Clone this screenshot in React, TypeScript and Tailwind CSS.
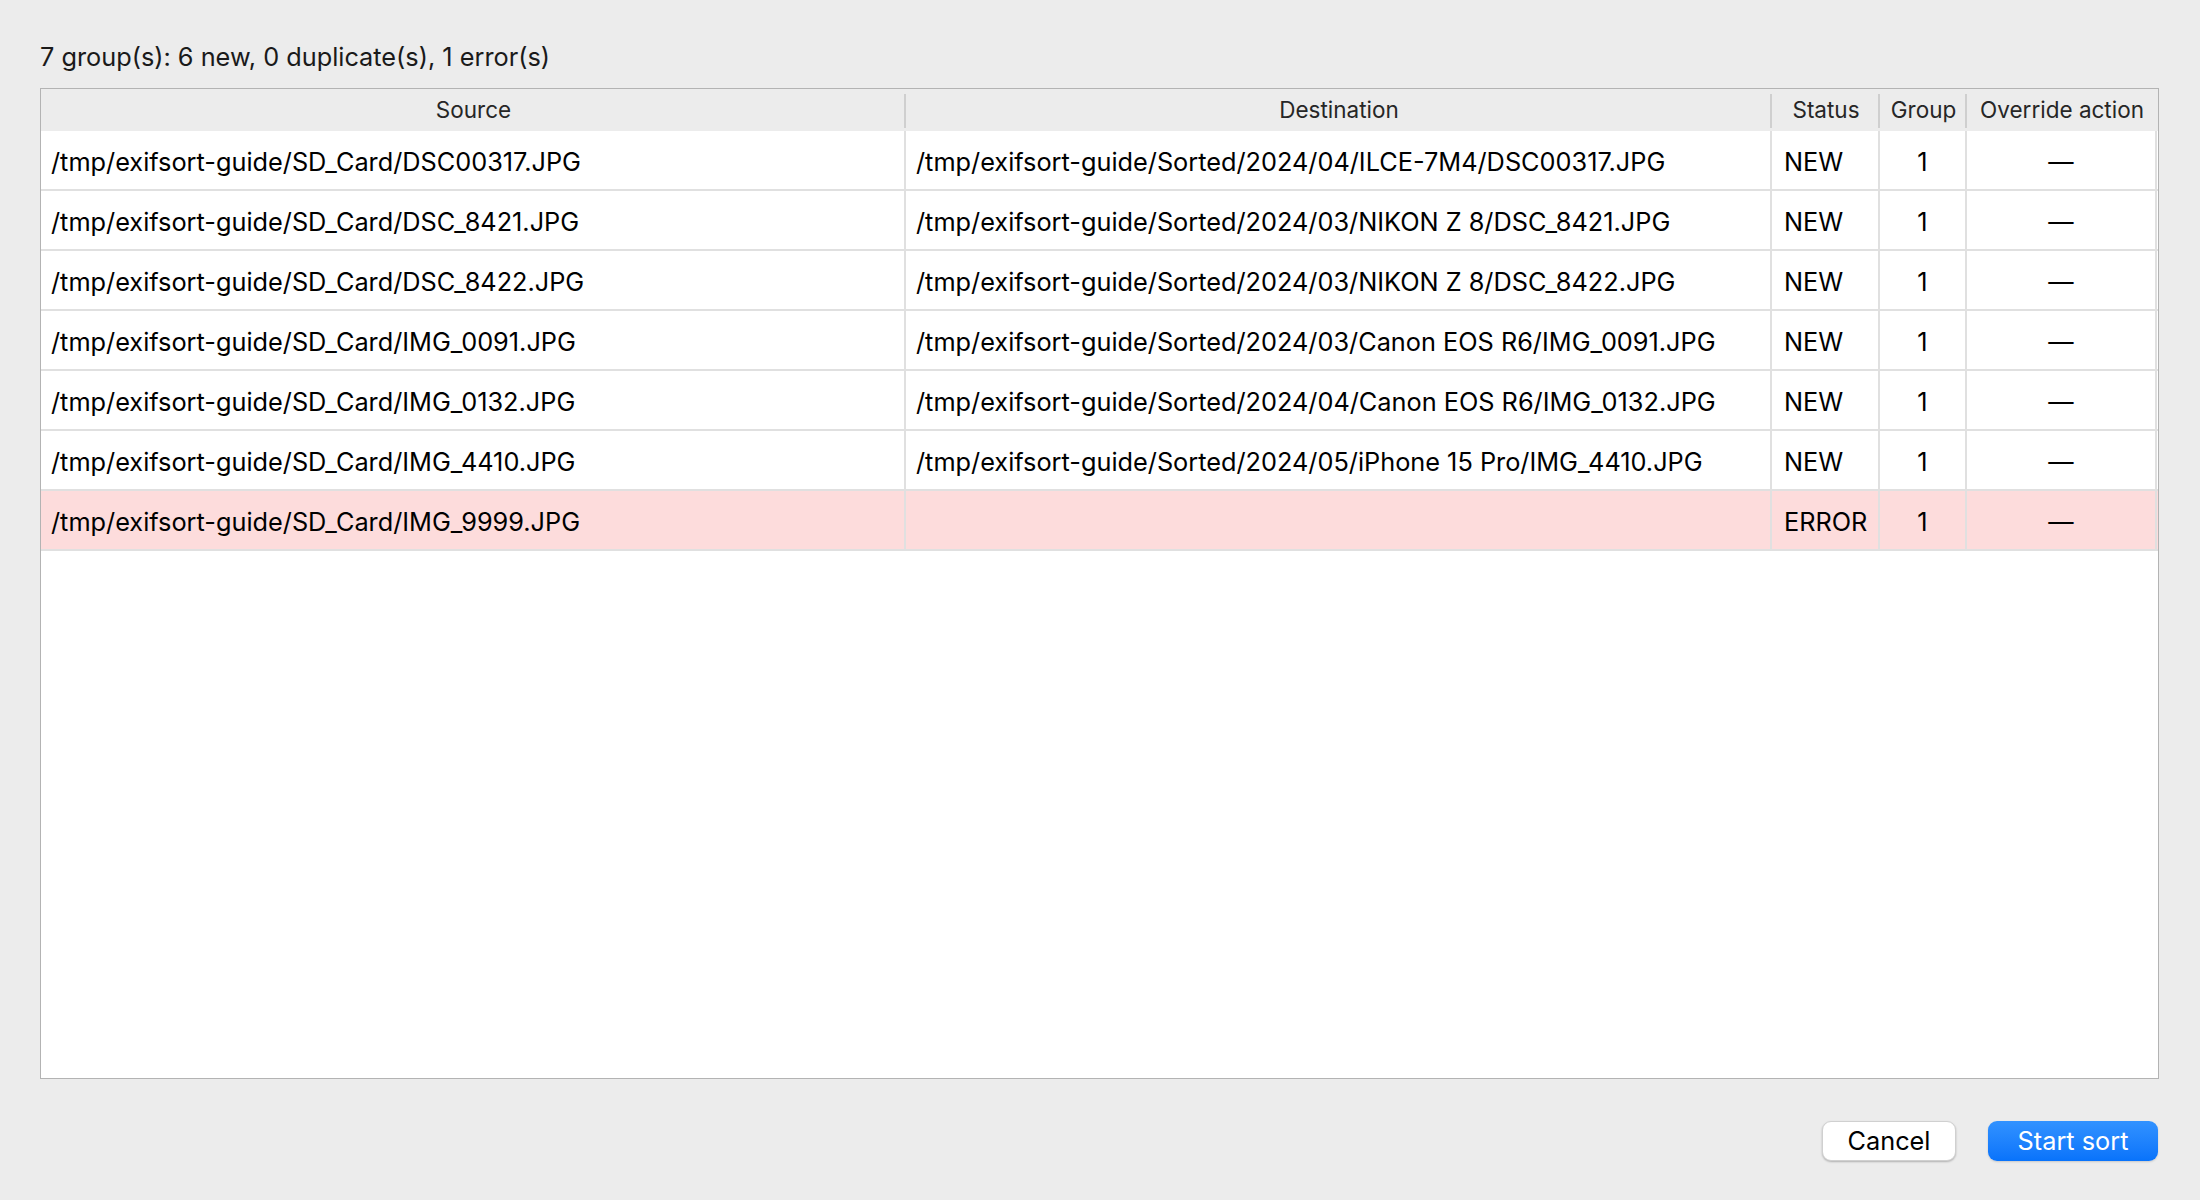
import React from 'react'

interface Row {
  source: string
  destination: string
  status: 'NEW' | 'ERROR'
  group: number
}

const rows: Row[] = [
  { source: '/tmp/exifsort-guide/SD_Card/DSC00317.JPG', destination: '/tmp/exifsort-guide/Sorted/2024/04/ILCE-7M4/DSC00317.JPG', status: 'NEW', group: 1 },
  { source: '/tmp/exifsort-guide/SD_Card/DSC_8421.JPG', destination: '/tmp/exifsort-guide/Sorted/2024/03/NIKON Z 8/DSC_8421.JPG', status: 'NEW', group: 1 },
  { source: '/tmp/exifsort-guide/SD_Card/DSC_8422.JPG', destination: '/tmp/exifsort-guide/Sorted/2024/03/NIKON Z 8/DSC_8422.JPG', status: 'NEW', group: 1 },
  { source: '/tmp/exifsort-guide/SD_Card/IMG_0091.JPG', destination: '/tmp/exifsort-guide/Sorted/2024/03/Canon EOS R6/IMG_0091.JPG', status: 'NEW', group: 1 },
  { source: '/tmp/exifsort-guide/SD_Card/IMG_0132.JPG', destination: '/tmp/exifsort-guide/Sorted/2024/04/Canon EOS R6/IMG_0132.JPG', status: 'NEW', group: 1 },
  { source: '/tmp/exifsort-guide/SD_Card/IMG_4410.JPG', destination: '/tmp/exifsort-guide/Sorted/2024/05/iPhone 15 Pro/IMG_4410.JPG', status: 'NEW', group: 1 },
  { source: '/tmp/exifsort-guide/SD_Card/IMG_9999.JPG', destination: '', status: 'ERROR', group: 1 },
]

const cols = 'grid grid-cols-[865px_866px_108px_87px_190px]'

function HeaderCell({ label, last }: { label: string; last?: boolean }) {
  return (
    <div className="relative flex h-full items-center justify-center text-[22.5px] text-[#262626]">
      {label}
      {!last && <div className="absolute right-0 top-[5px] bottom-[3px] w-[2px] bg-[#cfcfcf]" />}
    </div>
  )
}

export default function App() {
  return (
    <div
      className="flex h-[1200px] w-full flex-col bg-[#ececec] pl-[40px] pr-[41px] pt-[33px]"
      style={{ fontFamily: 'Inter, "Noto Sans", sans-serif' }}
    >
      <div className="h-[48px] text-[25.3px] leading-[48px] text-[#1a1a1a]">
        7 group(s): 6 new, 0 duplicate(s), 1 error(s)
      </div>

      <div className="mt-[7px] h-[991px] border border-[#b3b3b3] bg-white">
        <div className={`${cols} h-[42px] bg-[#ececec]`}>
          <HeaderCell label="Source" />
          <HeaderCell label="Destination" />
          <HeaderCell label="Status" />
          <HeaderCell label="Group" />
          <HeaderCell label="Override action" last />
        </div>

        {rows.map((row) => (
          <div
            key={row.source}
            className={`${cols} h-[60px] border-b-2 border-[#e0e0e0] text-[25.3px] text-black ${
              row.status === 'ERROR' ? 'bg-[#fddcdc] text-[#222]' : 'bg-white'
            }`}
          >
            <div className="flex items-center border-r-2 border-[#e0e0e0] pl-[10px] pt-[3px] whitespace-nowrap">{row.source}</div>
            <div className="flex items-center border-r-2 border-[#e0e0e0] pl-[10px] pt-[3px] whitespace-nowrap">{row.destination}</div>
            <div className="flex items-center border-r-2 border-[#e0e0e0] pl-[12px] pt-[3px]">{row.status}</div>
            <div className="flex items-center justify-center border-r-2 border-[#e0e0e0] pt-[3px]">{row.group}</div>
            <div className="flex items-center justify-center border-r-2 border-[#e0e0e0] pt-[3px]">—</div>
          </div>
        ))}
      </div>

      <div className="mt-[42px] flex justify-end gap-[32px] pr-[1px]">
        <button className="h-[40px] w-[134px] rounded-[9px] border border-[#d0d0d0] bg-white text-[25.3px] text-black shadow-[0_1px_2px_rgba(0,0,0,0.25)]">
          Cancel
        </button>
        <button className="h-[40px] w-[170px] rounded-[9px] bg-linear-to-b from-[#3192ff] to-[#0873fb] text-[25.3px] text-white shadow-[0_1px_2px_rgba(0,0,0,0.15)]">
          Start sort
        </button>
      </div>
    </div>
  )
}
